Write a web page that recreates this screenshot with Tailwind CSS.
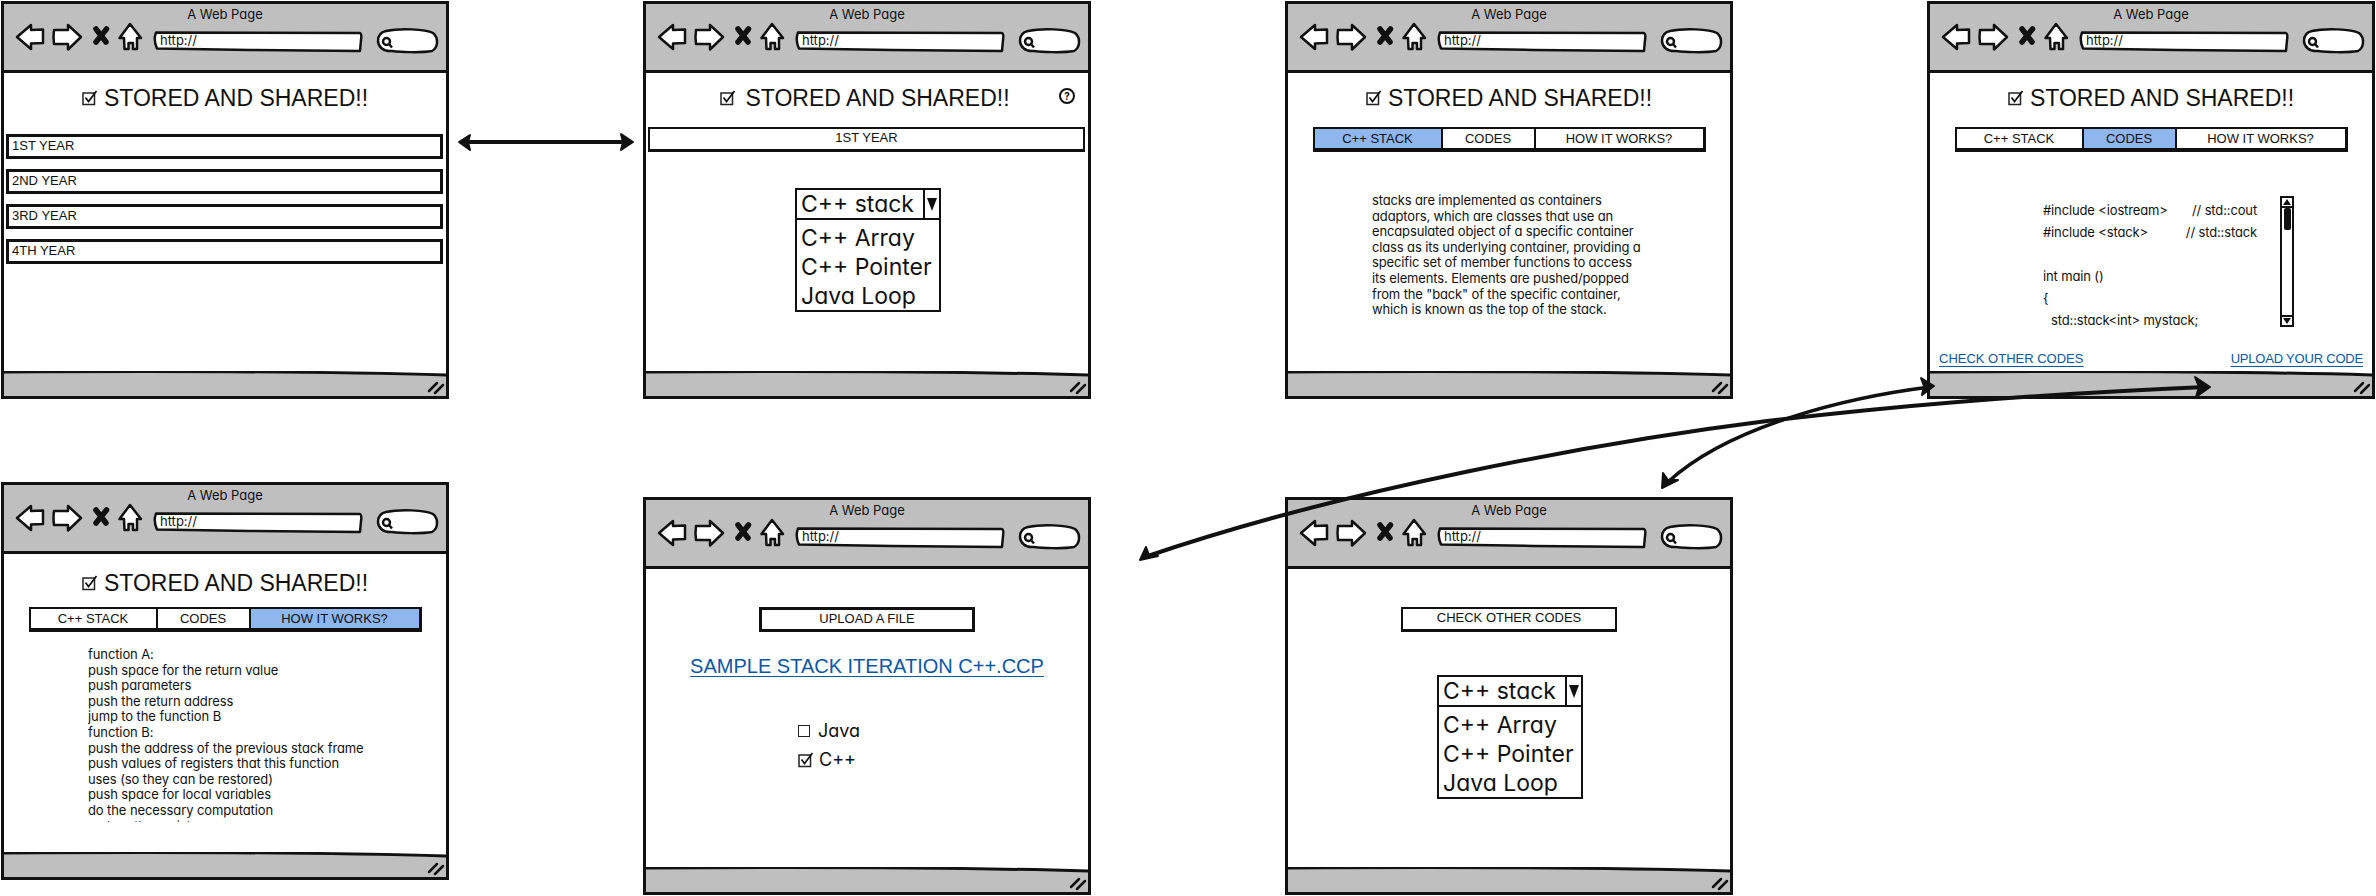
<!DOCTYPE html>
<html lang="en">
<head>
<meta charset="UTF-8" />
<title>Stored and shared wireframes</title>
<script src="https://cdn.jsdelivr.net/npm/@tailwindcss/browser@4"></script>
</head>
<body class="bg-white">
<!-- shared sketch parts -->
<svg class="absolute h-0 w-0">
  <defs>
    <symbol id="toolbar" viewBox="4 4 442 66">
      <g fill="#fff" stroke="#111" stroke-width="2.5" stroke-linejoin="round">
        <path d="M17 37 L31 25 L31 30 L43 29.500 L43 43 L31 43.500 L31 49 Z" />
        <path d="M54 30 L68 30 L68 25 L81 37 L68 49.500 L68 44 L54 44 Q53 37 54 30 Z" />
        <path d="M130 24 L119.500 38 L124 38 L124.500 49 L128.500 49 L128.500 43 L133 43 L133 49 L137 49 L137 38 L141 38 Z" />
        <path d="M156 32.500 L360 33 Q362 34 361 40 L360 51 L250 50 L157 48.500 Q154 42 155 36 Z" />
        <path d="M386 31 C400 28 425 29 433 33 C439 38 438 48 432 51 C420 53 400 52 392 51 C383 52 378 46 378 41 C378 35 381 32 386 31 Z" />
        <circle cx="386.500" cy="41.500" r="3.500" fill="none" />
      </g>
      <path d="M389 44 L392 47.500" stroke="#111" stroke-width="2.500" />
      <path d="M96 29 L106 42 M106.500 29 L96 42" stroke="#111" stroke-width="5.500" stroke-linecap="round" />
    </symbol>
    <symbol id="statusbar" viewBox="0 0 442 25">
      <path d="M0 1 C150 0 300 0 442 4 L442 25 L0 25 Z" fill="#bfbfbf" />
      <path d="M0 1 C150 0 300 0 442 4" fill="none" stroke="#111" stroke-width="3" />
      <path d="M425 20 L433 12 M431 22 L439 14" stroke="#111" stroke-width="2.500" stroke-linecap="round" />
    </symbol>
    <symbol id="checked" viewBox="0 0 16 16">
      <rect x="1" y="3" width="11.500" height="11.500" fill="none" stroke="#222" stroke-width="1.500" />
      <path d="M3.500 7.500 L6.500 11.500 L14.500 1" fill="none" stroke="#111" stroke-width="1.700" />
    </symbol>
  </defs>
</svg>

<main class="relative h-[896px] w-[2376px] overflow-hidden font-['Inter',sans-serif] text-[#111] [font-feature-settings:'cv11']">

  <!-- window 1: year list -->
  <section class="absolute left-[1px] top-[1px] flex h-[398px] w-[448px] flex-col border-[3px] border-[#111] bg-white">
    <header class="relative h-[69px] shrink-0 border-b-[3px] border-[#111] bg-[#bfbfbf]">
      <svg class="absolute left-0 top-0 h-[66px] w-[442px]"><use href="#toolbar" /></svg>
      <p class="relative h-[19px] text-center text-[13px] leading-[20px]">A Web Page</p>
      <p class="relative ml-[156px] mt-[9px] text-[13px] leading-[16px]">http://</p>
    </header>
    <div class="h-[298px] overflow-hidden">
      <h1 class="mt-[11px] flex h-[28px] items-center justify-center gap-[6px] font-['Liberation_Sans',sans-serif] text-[23px] font-normal leading-[28px]">
        <svg class="h-[16px] w-[16px]"><use href="#checked" /></svg>STORED AND SHARED!!
      </h1>
      <ul class="mt-[22px] flex flex-col gap-[10px] pl-[2px] pr-[3px] font-['Liberation_Sans',sans-serif] text-[13px]">
        <li class="h-[25px] border-[3px] border-[#111] pl-[3px] leading-[17px]">1ST YEAR</li>
        <li class="h-[25px] border-[3px] border-[#111] pl-[3px] leading-[17px]">2ND YEAR</li>
        <li class="h-[25px] border-[3px] border-[#111] pl-[3px] leading-[17px]">3RD YEAR</li>
        <li class="h-[25px] border-[3px] border-[#111] pl-[3px] leading-[17px]">4TH YEAR</li>
      </ul>
    </div>
    <svg class="h-[25px] w-[442px] shrink-0"><use href="#statusbar" /></svg>
  </section>

  <!-- window 2: year detail with dropdown -->
  <section class="absolute left-[643px] top-[1px] flex h-[398px] w-[448px] flex-col border-[3px] border-[#111] bg-white">
    <header class="relative h-[69px] shrink-0 border-b-[3px] border-[#111] bg-[#bfbfbf]">
      <svg class="absolute left-0 top-0 h-[66px] w-[442px]"><use href="#toolbar" /></svg>
      <p class="relative h-[19px] text-center text-[13px] leading-[20px]">A Web Page</p>
      <p class="relative ml-[156px] mt-[9px] text-[13px] leading-[16px]">http://</p>
    </header>
    <div class="h-[298px] overflow-hidden">
      <div class="relative mt-[11px] h-[28px]">
        <h1 class="flex h-[28px] items-center justify-center gap-[9px] pr-[4px] font-['Liberation_Sans',sans-serif] text-[23px] font-normal leading-[28px]">
          <svg class="h-[16px] w-[16px]"><use href="#checked" /></svg>STORED AND SHARED!!
        </h1>
        <span class="absolute left-[413px] top-[4px] flex h-[16px] w-[16px] items-center justify-center rounded-full border-2 border-[#111] text-[10px] font-bold leading-none">?</span>
      </div>
      <div class="ml-[2px] mt-[15px] h-[25px] w-[437px] border-2 border-b-[3px] border-[#111] text-center font-['Liberation_Sans',sans-serif] text-[13px] leading-[18px]">1ST YEAR</div>
      <div class="ml-[149px] mt-[36px] w-[146px]">
        <div class="flex h-[32px] border-2 border-[#111] text-[23px] leading-[29px]">
          <span class="flex-1 pl-[4px]">C++ stack</span>
          <span class="flex w-[16px] items-center justify-center border-l-2 border-[#111]"><svg class="h-[14px] w-[10px]" viewBox="0 0 10 14"><path d="M0 1 H10 L5 14 Z" fill="#111" /></svg></span>
        </div>
        <ul class="h-[92px] border-2 border-t-0 border-[#111] pl-[4px] pt-[4px] text-[23px] leading-[29px]">
          <li>C++ Array</li>
          <li>C++ Pointer</li>
          <li>Java Loop</li>
        </ul>
      </div>
    </div>
    <svg class="h-[25px] w-[442px] shrink-0"><use href="#statusbar" /></svg>
  </section>

  <!-- window 3: C++ stack tab -->
  <section class="absolute left-[1285px] top-[1px] flex h-[398px] w-[448px] flex-col border-[3px] border-[#111] bg-white">
    <header class="relative h-[69px] shrink-0 border-b-[3px] border-[#111] bg-[#bfbfbf]">
      <svg class="absolute left-0 top-0 h-[66px] w-[442px]"><use href="#toolbar" /></svg>
      <p class="relative h-[19px] text-center text-[13px] leading-[20px]">A Web Page</p>
      <p class="relative ml-[156px] mt-[9px] text-[13px] leading-[16px]">http://</p>
    </header>
    <div class="h-[298px] overflow-hidden">
      <h1 class="mt-[11px] flex h-[28px] items-center justify-center gap-[6px] font-['Liberation_Sans',sans-serif] text-[23px] font-normal leading-[28px]">
        <svg class="h-[16px] w-[16px]"><use href="#checked" /></svg>STORED AND SHARED!!
      </h1>
      <nav class="mx-auto mt-[15px] flex h-[25px] w-[393px] border-b-[4px] border-l-2 border-r-[3px] border-t-2 border-[#111] font-['Liberation_Sans',sans-serif] text-[13px] leading-[19px]">
        <span class="w-[126px] bg-[#8fb6ef] text-center">C++ STACK</span>
        <span class="w-[93px] border-l-2 border-[#111] text-center">CODES</span>
        <span class="flex-1 border-l-2 border-[#111] text-center">HOW IT WORKS?</span>
      </nav>
      <p class="ml-[84px] mt-[41px] whitespace-nowrap text-[13px] leading-[15.6px] tracking-[-0.14px]">stacks are implemented as containers<br />adaptors, which are classes that use an<br />encapsulated object of a specific container<br />class as its underlying container, providing a<br />specific set of member functions to access<br />its elements. Elements are pushed/popped<br />from the "back" of the specific container,<br />which is known as the top of the stack.</p>
    </div>
    <svg class="h-[25px] w-[442px] shrink-0"><use href="#statusbar" /></svg>
  </section>

  <!-- window 4: codes tab -->
  <section class="absolute left-[1927px] top-[1px] flex h-[398px] w-[448px] flex-col border-[3px] border-[#111] bg-white">
    <header class="relative h-[69px] shrink-0 border-b-[3px] border-[#111] bg-[#bfbfbf]">
      <svg class="absolute left-0 top-0 h-[66px] w-[442px]"><use href="#toolbar" /></svg>
      <p class="relative h-[19px] text-center text-[13px] leading-[20px]">A Web Page</p>
      <p class="relative ml-[156px] mt-[9px] text-[13px] leading-[16px]">http://</p>
    </header>
    <div class="h-[298px] overflow-hidden">
      <h1 class="mt-[11px] flex h-[28px] items-center justify-center gap-[6px] font-['Liberation_Sans',sans-serif] text-[23px] font-normal leading-[28px]">
        <svg class="h-[16px] w-[16px]"><use href="#checked" /></svg>STORED AND SHARED!!
      </h1>
      <nav class="mx-auto mt-[15px] flex h-[25px] w-[393px] border-b-[4px] border-l-2 border-r-[3px] border-t-2 border-[#111] font-['Liberation_Sans',sans-serif] text-[13px] leading-[19px]">
        <span class="w-[125px] text-center">C++ STACK</span>
        <span class="w-[93px] border-l-2 border-[#111] bg-[#8fb6ef] text-center">CODES</span>
        <span class="flex-1 border-l-2 border-[#111] text-center">HOW IT WORKS?</span>
      </nav>
      <div class="ml-[113px] mt-[44px] flex items-start">
        <div class="w-[214px] whitespace-nowrap pt-[3px] text-[13px] leading-[22px] tracking-[-0.14px]">
          <p class="flex justify-between"><span>#include &lt;iostream&gt;</span><span>// std::cout</span></p>
          <p class="flex justify-between"><span>#include &lt;stack&gt;</span><span>// std::stack</span></p>
          <p class="h-[22px]"></p>
          <p>int main ()</p>
          <p>{</p>
          <p class="pl-[8px]">std::stack&lt;int&gt; mystack;</p>
        </div>
        <div class="ml-[23px] flex h-[131px] w-[14px] flex-col border-2 border-[#111]">
          <span class="flex h-[10px] items-center justify-center border-b-2 border-[#111]"><svg class="h-[6px] w-[8px]" viewBox="0 0 8 6"><path d="M4 0 L8 6 H0 Z" fill="#111" /></svg></span>
          <span class="mx-auto h-[22px] w-[7px] rounded-[2px] bg-[#111]"></span>
          <span class="flex-1"></span>
          <span class="flex h-[10px] items-center justify-center border-t-2 border-[#111]"><svg class="h-[6px] w-[8px]" viewBox="0 0 8 6"><path d="M4 6 L8 0 H0 Z" fill="#111" /></svg></span>
        </div>
      </div>
      <div class="mt-[20px] flex justify-between px-[9px] font-['Liberation_Sans',sans-serif] text-[13px] leading-[16px] text-[#0b57a4]">
        <a class="underline decoration-1 underline-offset-[3px]">CHECK OTHER CODES</a>
        <a class="tracking-[-0.2px] underline decoration-1 underline-offset-[3px]">UPLOAD YOUR CODE</a>
      </div>
    </div>
    <svg class="h-[25px] w-[442px] shrink-0"><use href="#statusbar" /></svg>
  </section>

  <!-- window 5: how it works tab -->
  <section class="absolute left-[1px] top-[482px] flex h-[398px] w-[448px] flex-col border-[3px] border-[#111] bg-white">
    <header class="relative h-[69px] shrink-0 border-b-[3px] border-[#111] bg-[#bfbfbf]">
      <svg class="absolute left-0 top-0 h-[66px] w-[442px]"><use href="#toolbar" /></svg>
      <p class="relative h-[19px] text-center text-[13px] leading-[20px]">A Web Page</p>
      <p class="relative ml-[156px] mt-[9px] text-[13px] leading-[16px]">http://</p>
    </header>
    <div class="h-[298px] overflow-hidden">
      <h1 class="mt-[15px] flex h-[28px] items-center justify-center gap-[6px] font-['Liberation_Sans',sans-serif] text-[23px] font-normal leading-[28px]">
        <svg class="h-[16px] w-[16px]"><use href="#checked" /></svg>STORED AND SHARED!!
      </h1>
      <nav class="mx-auto mt-[10px] flex h-[25px] w-[393px] border-b-[4px] border-l-2 border-r-[3px] border-t-2 border-[#111] font-['Liberation_Sans',sans-serif] text-[13px] leading-[19px]">
        <span class="w-[125px] text-center">C++ STACK</span>
        <span class="w-[93px] border-l-2 border-[#111] text-center">CODES</span>
        <span class="flex-1 border-l-2 border-[#111] bg-[#8fb6ef] text-center">HOW IT WORKS?</span>
      </nav>
      <p class="ml-[84px] mt-[15px] h-[175px] overflow-hidden whitespace-nowrap text-[13px] leading-[15.6px] tracking-[-0.1px]">function A:<br />push space for the return value<br />push parameters<br />push the return address<br />jump to the function B<br />function B:<br />push the address of the previous stack frame<br />push values of registers that this function<br />uses (so they can be restored)<br />push space for local variables<br />do the necessary computation<br />restore the registers</p>
    </div>
    <svg class="h-[25px] w-[442px] shrink-0"><use href="#statusbar" /></svg>
  </section>

  <!-- window 6: upload a file -->
  <section class="absolute left-[643px] top-[497px] flex h-[398px] w-[448px] flex-col border-[3px] border-[#111] bg-white">
    <header class="relative h-[69px] shrink-0 border-b-[3px] border-[#111] bg-[#bfbfbf]">
      <svg class="absolute left-0 top-0 h-[66px] w-[442px]"><use href="#toolbar" /></svg>
      <p class="relative h-[19px] text-center text-[13px] leading-[20px]">A Web Page</p>
      <p class="relative ml-[156px] mt-[9px] text-[13px] leading-[16px]">http://</p>
    </header>
    <div class="h-[298px] overflow-hidden">
      <div class="ml-[113px] mt-[38px] h-[25px] w-[216px] border-[3px] border-[#111] text-center font-['Liberation_Sans',sans-serif] text-[13px] leading-[17px]">UPLOAD A FILE</div>
      <p class="mt-[22px] text-center font-['Liberation_Sans',sans-serif] text-[20px] leading-[24px] text-[#0b57a4]"><a class="underline decoration-1 underline-offset-[3px]">SAMPLE STACK ITERATION C++.CCP</a></p>
      <ul class="ml-[152px] mt-[38px] text-[18px] leading-[29px]">
        <li class="flex items-center gap-[8px]"><span class="h-[12px] w-[12px] border-[1.5px] border-[#222]"></span>Java</li>
        <li class="flex items-center gap-[5px]"><svg class="h-[16px] w-[16px]"><use href="#checked" /></svg>C++</li>
      </ul>
    </div>
    <svg class="h-[25px] w-[442px] shrink-0"><use href="#statusbar" /></svg>
  </section>

  <!-- window 7: check other codes -->
  <section class="absolute left-[1285px] top-[497px] flex h-[398px] w-[448px] flex-col border-[3px] border-[#111] bg-white">
    <header class="relative h-[69px] shrink-0 border-b-[3px] border-[#111] bg-[#bfbfbf]">
      <svg class="absolute left-0 top-0 h-[66px] w-[442px]"><use href="#toolbar" /></svg>
      <p class="relative h-[19px] text-center text-[13px] leading-[20px]">A Web Page</p>
      <p class="relative ml-[156px] mt-[9px] text-[13px] leading-[16px]">http://</p>
    </header>
    <div class="h-[298px] overflow-hidden">
      <div class="ml-[113px] mt-[38px] h-[25px] w-[216px] border-2 border-b-[3px] border-[#111] text-center font-['Liberation_Sans',sans-serif] text-[13px] leading-[18px]">CHECK OTHER CODES</div>
      <div class="ml-[149px] mt-[43px] w-[146px]">
        <div class="flex h-[32px] border-2 border-[#111] text-[23px] leading-[29px]">
          <span class="flex-1 pl-[4px]">C++ stack</span>
          <span class="flex w-[16px] items-center justify-center border-l-2 border-[#111]"><svg class="h-[14px] w-[10px]" viewBox="0 0 10 14"><path d="M0 1 H10 L5 14 Z" fill="#111" /></svg></span>
        </div>
        <ul class="h-[92px] border-2 border-t-0 border-[#111] pl-[4px] pt-[4px] text-[23px] leading-[29px]">
          <li>C++ Array</li>
          <li>C++ Pointer</li>
          <li>Java Loop</li>
        </ul>
      </div>
    </div>
    <svg class="h-[25px] w-[442px] shrink-0"><use href="#statusbar" /></svg>
  </section>

  <!-- connectors between the windows -->
  <svg class="pointer-events-none absolute left-0 top-0 h-[896px] w-[2376px]" viewBox="0 0 2376 896">
    <g fill="none" stroke="#111" stroke-linecap="round">
      <path d="M465 142 H628" stroke-width="4" />
      <path d="M1930 387 C1850 397 1730 425 1668 482" stroke-width="3.500" />
      <path d="M2205 387 C2000 396 1880 408 1767 421 C1600 442 1340 490 1145 557" stroke-width="4" />
    </g>
    <g fill="#111" stroke="#111" stroke-width="2" stroke-linejoin="round">
      <path d="M459 142 L470 135 L468 142 L470 150 Z" />
      <path d="M633 142 L621 134 L623 142 L621 150 Z" />
      <path d="M1934 386 L1921 378 L1924 386 L1922 395 Z" />
      <path d="M1662 488 L1663 473 L1668 480 L1678 480 Z" />
      <path d="M2210 387 L2195 377 L2199 387 L2196 397 Z" />
      <path d="M1140 560 L1146 547 L1149 555 L1158 556 Z" />
    </g>
  </svg>
</main>
</body>
</html>
